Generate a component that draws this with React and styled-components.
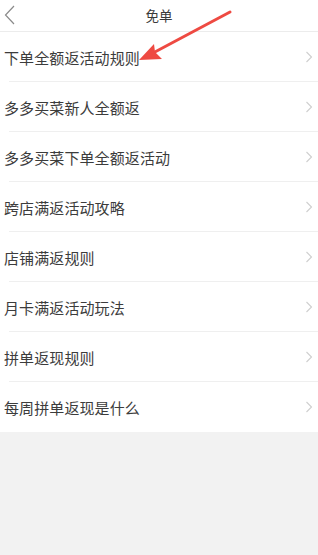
import React from "react";
import styled, { createGlobalStyle } from "styled-components";

const Global = createGlobalStyle`
  html, body { margin: 0; padding: 0; background: #f2f2f2; }
  body { font-family: "Noto Sans CJK SC", "Noto Sans", sans-serif; }
  #root { min-height: 555px; }
`;

const Page = styled.div`
  position: relative;
  width: 318px;
  min-height: 555px;
  background: #f2f2f2;
  overflow: hidden;
`;

const Header = styled.div`
  height: 31px;
  background: #fff;
  border-bottom: 1px solid #ececec;
  display: flex;
  align-items: center;
  justify-content: center;
  position: relative;
`;

const Title = styled.div`
  font-size: 13.5px;
  color: #3a3a3a;
  line-height: 1;
`;

const Back = styled.svg`
  position: absolute;
  left: 4px;
  top: 5px;
`;

const List = styled.div`
  background: #fff;
`;

const Row = styled.div`
  height: 50px;
  display: flex;
  align-items: center;
  justify-content: space-between;
  padding-left: 4px;
  padding-right: 5px;
  position: relative;
  &::after {
    content: "";
    display: ${(p) => (p.$last ? "none" : "block")};
    position: absolute;
    left: 9px;
    right: 0;
    bottom: 0;
    height: 1px;
    background: #efefef;
  }
`;

const Label = styled.span`
  font-size: 15px;
  color: #3c3c3c;
  letter-spacing: 0.1px;
`;

const Arrow = styled.svg`
  position: absolute;
  left: 0;
  top: 0;
  pointer-events: none;
`;

const Chevron = () => (
  <svg width="8" height="12" viewBox="0 0 8 12">
    <path d="M1.5 1 L6.5 6 L1.5 11" fill="none" stroke="#cfcfcf" strokeWidth="1.1" />
  </svg>
);

const items = [
  "下单全额返活动规则",
  "多多买菜新人全额返",
  "多多买菜下单全额返活动",
  "跨店满返活动攻略",
  "店铺满返规则",
  "月卡满返活动玩法",
  "拼单返现规则",
  "每周拼单返现是什么",
];

export default function App() {
  return (
    <Page>
      <Global />
      <Header>
        <Back width="12" height="20" viewBox="0 0 12 20">
          <path d="M10 1 L1.5 10 L10 19" fill="none" stroke="#8a8a8a" strokeWidth="1.2" />
        </Back>
        <Title>免单</Title>
      </Header>
      <List>
        {items.map((t, i) => (
          <Row key={t} $last={i === items.length - 1}>
            <Label>{t}</Label>
            <Chevron />
          </Row>
        ))}
      </List>
      <Arrow width="318" height="80" viewBox="0 0 318 80">
        <line x1="230" y1="12" x2="153" y2="53" stroke="#ee4a42" strokeWidth="3" strokeLinecap="round" />
        <path d="M139 60 L154 44 L155 52 L162 59 Z" fill="#ee4a42" />
      </Arrow>
    </Page>
  );
}
